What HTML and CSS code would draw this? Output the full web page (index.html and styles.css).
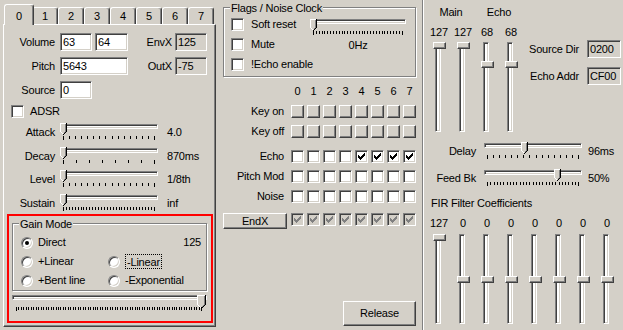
FILE: index.html
```html
<!DOCTYPE html>
<html lang="en">
<head>
<meta charset="utf-8">
<title>DSP</title>
<link rel="stylesheet" href="styles.css">
</head>
<body>
<svg class="defs" width="0" height="0" aria-hidden="true">
  <defs>
    <symbol id="chk" viewBox="0 0 7 7"><path d="M6 0h1v1H6zM5 1h2v1H5zM0 2h1v1H0zM4 2h3v1H4zM0 3h2v1H0zM3 3h3v1H3zM0 4h5v1H0zM1 5h3v1H1zM2 6h1v1H2z"/></symbol>
    <symbol id="thumb" viewBox="0 0 7 12">
      <path fill="#d4d0c8" d="M1 1h4v8H1zM2 9h2v1H2zM3 10h1v1H3z"/>
      <path fill="#fff" d="M0 0h6v1H1v8H0zM1 9h1v1H1zM2 10h1v1H2z"/>
      <path fill="#808080" d="M5 1h1v8H5zM4 9h1v1H4z"/>
      <path fill="#000" d="M6 0h1v9H6zM5 9h1v1H5zM4 10h1v1H4zM3 11h1v1H3z"/>
    </symbol>
    <symbol id="thumb9" viewBox="0 0 9 13">
      <path fill="#d4d0c8" d="M1 1h6v9H1zM2 10h4v1H2zM3 11h2v1H3z"/>
      <path fill="#fff" d="M0 0h8v1H1v9H0zM1 10h1v1H1zM2 11h1v1H2zM3 12h1v1H3z"/>
      <path fill="#808080" d="M7 1h1v9H7zM6 10h1v1H6zM5 11h1v1H5z"/>
      <path fill="#000" d="M8 0h1v10H8zM7 10h1v1H7zM6 11h1v1H6zM4 12h2v1H4z"/>
    </symbol>
  </defs>
</svg>
<div class="dlg">
  <section class="left">
    <div class="tabs">
      <div class="tab sel">0</div><div class="tab">1</div><div class="tab">2</div><div class="tab">3</div><div class="tab">4</div><div class="tab">5</div><div class="tab">6</div><div class="tab">7</div>
    </div>
    <div class="panel">
      <div class="frow">
        <span class="lbl">Volume</span>
        <span class="edit w32">63</span>
        <span class="edit w33 gap3">64</span>
        <span class="lbl2">EnvX</span>
        <span class="edit ro w32">125</span>
      </div>
      <div class="frow">
        <span class="lbl">Pitch</span>
        <span class="edit w68">5643</span>
        <span class="lbl2">OutX</span>
        <span class="edit ro w32">-75</span>
      </div>
      <div class="frow">
        <span class="lbl">Source</span>
        <span class="edit w32">0</span>
      </div>
      <div class="adsr"><span class="cb"></span><span class="cbl">ADSR</span></div>
      <div class="srow sr1">
        <span class="lbl">Attack</span>
        <div class="hs w98"><div class="track"></div><svg class="thumb" style="left:0px" viewBox="0 0 7 12"><use href="#thumb"/></svg>
          <div class="ticks"><i class="e"></i><i></i><i></i><i></i><i></i><i></i><i></i><i></i><i></i><i></i><i></i><i></i><i></i><i></i><i></i><i class="e"></i></div></div>
        <span class="val">4.0</span>
      </div>
      <div class="srow sr2">
        <span class="lbl">Decay</span>
        <div class="hs w98"><div class="track"></div><svg class="thumb" style="left:0px" viewBox="0 0 7 12"><use href="#thumb"/></svg>
          <div class="ticks"><i class="e"></i><i></i><i></i><i></i><i></i><i></i><i></i><i class="e"></i></div></div>
        <span class="val">870ms</span>
      </div>
      <div class="srow sr3">
        <span class="lbl">Level</span>
        <div class="hs w98"><div class="track"></div><svg class="thumb" style="left:0px" viewBox="0 0 7 12"><use href="#thumb"/></svg>
          <div class="ticks"><i class="e"></i><i></i><i></i><i></i><i></i><i></i><i></i><i></i><i></i><i></i><i></i><i></i><i></i><i></i><i></i><i class="e"></i></div></div>
        <span class="val">1/8th</span>
      </div>
      <div class="srow sr4">
        <span class="lbl">Sustain</span>
        <div class="hs w98"><div class="track"></div><svg class="thumb" style="left:0px" viewBox="0 0 7 12"><use href="#thumb"/></svg>
          <div class="ticks"><i class="e"></i><i></i><i></i><i></i><i></i><i></i><i></i><i></i><i></i><i></i><i></i><i></i><i></i><i></i><i></i><i></i><i></i><i></i><i></i><i></i><i></i><i></i><i></i><i></i><i></i><i></i><i></i><i></i><i></i><i></i><i></i><i class="e"></i></div></div>
        <span class="val">inf</span>
      </div>
      <div class="gainbox">
        <div class="group gaingrp">
          <div class="gtitle">Gain Mode</div>
          <div class="gr first">
            <span class="opt"><span class="radio on"></span><span class="t">Direct</span></span>
            <span class="gv">125</span>
          </div>
          <div class="gr">
            <span class="opt"><span class="radio"></span><span class="t">+Linear</span></span>
            <span class="opt"><span class="radio"></span><span class="t focus">-Linear</span></span>
          </div>
          <div class="gr">
            <span class="opt"><span class="radio"></span><span class="t">+Bent line</span></span>
            <span class="opt"><span class="radio"></span><span class="t">-Exponential</span></span>
          </div>
        </div>
        <div class="hs gain"><div class="track"></div><svg class="thumb9" style="left:185px" viewBox="0 0 9 13"><use href="#thumb9"/></svg>
          <div class="ticks"><i class="e"></i><i></i><i></i><i></i><i></i><i></i><i></i><i></i><i></i><i></i><i></i><i></i><i></i><i></i><i></i><i></i><i></i><i></i><i></i><i></i><i></i><i></i><i></i><i></i><i></i><i></i><i></i><i></i><i></i><i></i><i></i><i></i><i></i><i></i><i></i><i></i><i></i><i></i><i></i><i></i><i></i><i></i><i></i><i></i><i></i><i></i><i></i><i></i><i></i><i></i><i></i><i></i><i></i><i></i><i></i><i></i><i></i><i></i><i></i><i></i><i></i><i></i><i></i><i></i><i></i><i></i><i></i><i></i><i></i><i></i><i></i><i></i><i></i><i></i><i></i><i class="e"></i></div></div>
      </div>
    </div>
  </section>

  <section class="mid">
    <div class="group flags">
      <div class="gtitle">Flags / Noise Clock</div>
      <div class="flagbody">
        <div class="fchecks">
          <div class="crow"><span class="cb"></span><span class="cbl2">Soft reset</span></div>
          <div class="crow"><span class="cb"></span><span class="cbl2">Mute</span></div>
          <div class="crow"><span class="cb"></span><span class="cbl2">!Echo enable</span></div>
        </div>
        <div class="noise">
          <div class="hs w96"><div class="track"></div><svg class="thumb" style="left:0px" viewBox="0 0 7 12"><use href="#thumb"/></svg>
            <div class="ticks"><i class="e"></i><i></i><i></i><i></i><i></i><i></i><i></i><i></i><i></i><i></i><i></i><i></i><i></i><i></i><i></i><i></i><i></i><i></i><i></i><i></i><i></i><i></i><i></i><i></i><i></i><i></i><i></i><i></i><i></i><i></i><i></i><i class="e"></i></div></div>
          <div class="hz">0Hz</div>
        </div>
      </div>
    </div>

    <div class="bits">
      <div class="brow head"><span class="blbl"></span><span class="bn">0</span><span class="bn">1</span><span class="bn">2</span><span class="bn">3</span><span class="bn">4</span><span class="bn">5</span><span class="bn">6</span><span class="bn">7</span></div>
      <div class="brow keyon"><span class="blbl">Key on</span><span class="pb"></span><span class="pb"></span><span class="pb"></span><span class="pb"></span><span class="pb"></span><span class="pb"></span><span class="pb"></span><span class="pb"></span></div>
      <div class="brow keyoff"><span class="blbl">Key off</span><span class="pb"></span><span class="pb"></span><span class="pb"></span><span class="pb"></span><span class="pb"></span><span class="pb"></span><span class="pb"></span><span class="pb"></span></div>
      <div class="brow echo"><span class="blbl">Echo</span><span class="cb"></span><span class="cb"></span><span class="cb"></span><span class="cb"></span><span class="cb"><svg class="ck" viewBox="0 0 7 7"><use href="#chk"/></svg></span><span class="cb"><svg class="ck" viewBox="0 0 7 7"><use href="#chk"/></svg></span><span class="cb"><svg class="ck" viewBox="0 0 7 7"><use href="#chk"/></svg></span><span class="cb"><svg class="ck" viewBox="0 0 7 7"><use href="#chk"/></svg></span></div>
      <div class="brow pmod"><span class="blbl">Pitch Mod</span><span class="cb"></span><span class="cb"></span><span class="cb"></span><span class="cb"></span><span class="cb"></span><span class="cb"></span><span class="cb"></span><span class="cb"></span></div>
      <div class="brow noiserow"><span class="blbl">Noise</span><span class="cb"></span><span class="cb"></span><span class="cb"></span><span class="cb"></span><span class="cb"></span><span class="cb"></span><span class="cb"></span><span class="cb"></span></div>
      <div class="brow endx"><span class="btn endxbtn">EndX</span><span class="cb dis"><svg class="ck" viewBox="0 0 7 7"><use href="#chk"/></svg></span><span class="cb dis"><svg class="ck" viewBox="0 0 7 7"><use href="#chk"/></svg></span><span class="cb dis"><svg class="ck" viewBox="0 0 7 7"><use href="#chk"/></svg></span><span class="cb dis"><svg class="ck" viewBox="0 0 7 7"><use href="#chk"/></svg></span><span class="cb dis"><svg class="ck" viewBox="0 0 7 7"><use href="#chk"/></svg></span><span class="cb dis"><svg class="ck" viewBox="0 0 7 7"><use href="#chk"/></svg></span><span class="cb dis"><svg class="ck" viewBox="0 0 7 7"><use href="#chk"/></svg></span><span class="cb dis"><svg class="ck" viewBox="0 0 7 7"><use href="#chk"/></svg></span></div>
    </div>

    <div class="relrow"><span class="btn release">Release</span></div>
  </section>

  <div class="sep"></div>

  <section class="right">
    <div class="rtop">
      <div class="vgroup">
        <div class="vhead"><span>Main</span><span>Echo</span></div>
        <div class="vcols">
          <div class="vcol"><span class="vval">127</span><div class="vs"><div class="vtrack"></div><div class="vthumb" style="top:0px"></div></div></div>
          <div class="vcol"><span class="vval">127</span><div class="vs"><div class="vtrack"></div><div class="vthumb" style="top:0px"></div></div></div>
          <div class="vcol"><span class="vval">68</span><div class="vs"><div class="vtrack"></div><div class="vthumb" style="top:19px"></div></div></div>
          <div class="vcol"><span class="vval">68</span><div class="vs"><div class="vtrack"></div><div class="vthumb" style="top:19px"></div></div></div>
        </div>
      </div>
      <div class="addr">
        <div class="arow"><span class="albl">Source Dir</span><span class="edit ro w34">0200</span></div>
        <div class="arow"><span class="albl">Echo Addr</span><span class="edit ro w34">CF00</span></div>
      </div>
    </div>

    <div class="drow first">
      <span class="dlbl">Delay</span>
      <div class="hs w98"><div class="track"></div><svg class="thumb" style="left:37px" viewBox="0 0 7 12"><use href="#thumb"/></svg>
        <div class="ticks"><i class="e"></i><i></i><i></i><i></i><i></i><i></i><i></i><i></i><i></i><i></i><i></i><i></i><i></i><i></i><i></i><i class="e"></i></div></div>
      <span class="dval">96ms</span>
    </div>
    <div class="drow">
      <span class="dlbl">Feed Bk</span>
      <div class="hs w98"><div class="track"></div><svg class="thumb" style="left:70px" viewBox="0 0 7 12"><use href="#thumb"/></svg>
        <div class="ticks"><i class="e"></i><i></i><i></i><i></i><i></i><i></i><i></i><i></i><i></i><i></i><i></i><i></i><i></i><i></i><i></i><i></i><i></i><i></i><i></i><i></i><i></i><i></i><i></i><i></i><i></i><i></i><i></i><i></i><i class="e"></i></div></div>
      <span class="dval">50%</span>
    </div>

    <div class="firtitle">FIR Filter Coefficients</div>
    <div class="vcols fir">
      <div class="vcol"><span class="vval">127</span><div class="vs"><div class="vtrack"></div><div class="vthumb" style="top:0px"></div></div></div>
      <div class="vcol"><span class="vval">0</span><div class="vs"><div class="vtrack"></div><div class="vthumb" style="top:42px"></div></div></div>
      <div class="vcol"><span class="vval">0</span><div class="vs"><div class="vtrack"></div><div class="vthumb" style="top:42px"></div></div></div>
      <div class="vcol"><span class="vval">0</span><div class="vs"><div class="vtrack"></div><div class="vthumb" style="top:42px"></div></div></div>
      <div class="vcol"><span class="vval">0</span><div class="vs"><div class="vtrack"></div><div class="vthumb" style="top:42px"></div></div></div>
      <div class="vcol"><span class="vval">0</span><div class="vs"><div class="vtrack"></div><div class="vthumb" style="top:42px"></div></div></div>
      <div class="vcol"><span class="vval">0</span><div class="vs"><div class="vtrack"></div><div class="vthumb" style="top:42px"></div></div></div>
      <div class="vcol"><span class="vval">0</span><div class="vs"><div class="vtrack"></div><div class="vthumb" style="top:42px"></div></div></div>
    </div>
  </section>
</div>
</body>
</html>
```

FILE: styles.css
```css
* { box-sizing: border-box; }
html, body { margin: 0; padding: 0; }
body {
  width: 623px;
  height: 330px;
  overflow: hidden;
  background: #d4d0c8;
  color: #000;
  font: 11px/13px "Liberation Sans", Arial, sans-serif;
  letter-spacing: -0.2px;
}
.defs { position: absolute; width: 0; height: 0; overflow: hidden; }
.dlg { display: flex; height: 330px; }

/* ---------- shared win2k controls ---------- */
.edit {
  flex: none;
  height: 18px;
  border: 1px solid;
  border-color: #808080 #fff #fff #808080;
  box-shadow: inset 1px 1px #404040, inset -1px -1px #d4d0c8;
  background: #fff;
  padding: 0 0 0 2px;
  line-height: 17px;
  white-space: nowrap;
  overflow: hidden;
}
.edit.ro { background: #d4d0c8; }
.w32 { width: 32px; }
.w33 { width: 33px; }
.w34 { width: 34px; }
.w68 { width: 68px; }
.gap3 { margin-left: 3px; }

.cb {
  flex: none;
  width: 13px;
  height: 13px;
  border: 1px solid;
  border-color: #808080 #fff #fff #808080;
  box-shadow: inset 1px 1px #404040, inset -1px -1px #d4d0c8;
  background: #fff;
  padding: 2px;
  display: flex;
}
.cb.dis { background: #d4d0c8; }
.ck { width: 7px; height: 7px; fill: #000; display: block; }
.cb.dis .ck { fill: #808080; }

.pb {
  flex: none;
  width: 13px;
  height: 13px;
  border: 1px solid;
  border-color: #fff #404040 #404040 #fff;
  box-shadow: inset -1px -1px #808080;
  background: #d4d0c8;
}

.btn {
  flex: none;
  display: flex;
  align-items: center;
  justify-content: center;
  border: 1px solid;
  border-color: #fff #404040 #404040 #fff;
  box-shadow: inset -1px -1px #808080;
  background: #d4d0c8;
}

.radio {
  flex: none;
  width: 12px;
  height: 12px;
  border-radius: 50%;
  border: 1px solid;
  border-color: #808080 #fff #fff #808080;
  box-shadow: inset 1px 1px #404040, inset -1px -1px #d4d0c8;
  background: #fff;
  display: flex;
  align-items: center;
  justify-content: center;
}
.radio.on::after {
  content: "";
  width: 4px;
  height: 4px;
  border-radius: 50%;
  background: #000;
}

.group {
  border: 1px solid #808080;
  box-shadow: inset 1px 1px #fff, 1px 1px #fff;
}
.gtitle {
  width: fit-content;
  background: #d4d0c8;
  margin: -6px 0 0 6px;
  padding: 0 1px;
  line-height: 13px;
}

/* horizontal trackbar */
.hs { position: relative; flex: none; height: 18px; }
.w98 { width: 98px; }
.w96 { width: 96px; }
.track {
  height: 5px;
  margin-top: 1px;
  border: 1px solid;
  border-color: #808080 #fff #fff #808080;
  box-shadow: inset 1px 1px #404040, inset -1px -1px #d4d0c8;
  background: #fff;
}
.thumb { position: absolute; top: 0; width: 7px; height: 12px; display: block; }
.thumb9 { position: absolute; top: 0; width: 9px; height: 13px; display: block; }
.ticks {
  display: flex;
  justify-content: space-between;
  align-items: flex-start;
  height: 4px;
  margin: 7px 3px 0;
}
.ticks i { display: block; width: 1px; height: 3px; background: #000; }
.ticks i.e { height: 4px; }

/* vertical trackbar */
.vcols { display: flex; }
.vcol { width: 24px; display: flex; flex-direction: column; }
.vval { height: 13px; margin-top: 7px; text-align: center; white-space: nowrap; }
.vs { position: relative; width: 13px; height: 90px; margin: 3px 0 0 6px; }
.vtrack {
  width: 6px;
  height: 90px;
  margin-left: 2px;
  border: 1px solid;
  border-color: #808080 #fff #fff #808080;
  box-shadow: inset 1px 1px #404040, inset -1px -1px #d4d0c8;
  background: #fff;
}
.vthumb {
  position: absolute;
  left: 0;
  width: 13px;
  height: 7px;
  border: 1px solid;
  border-color: #fff #404040 #404040 #fff;
  box-shadow: inset -1px -1px #808080;
  background: #d4d0c8;
}

/* ---------- left: tab control ---------- */
.left { flex: none; width: 216px; padding: 4px 0 0 3px; }
.tabs { display: flex; align-items: flex-end; height: 20px; padding-left: 3px; }
.tab {
  flex: none;
  width: 26px;
  height: 17px;
  border: 1px solid;
  border-bottom: 0;
  border-color: #fff #404040 #404040 #fff;
  border-radius: 3px 3px 0 0;
  box-shadow: inset -1px 0 #808080;
  background: #d4d0c8;
  text-align: center;
  line-height: 16px;
}
.tab.sel {
  position: relative;
  z-index: 1;
  width: 30px;
  height: 21px;
  margin: 0 -2px -1px;
  line-height: 22px;
}
.panel {
  width: 213px;
  height: 303px;
  border: 1px solid;
  border-color: #fff #404040 #404040 #fff;
  box-shadow: inset -1px -1px #808080;
  padding-top: 8px;
}
.frow { display: flex; align-items: center; height: 18px; margin-bottom: 6px; }
.lbl { flex: none; width: 51px; margin-right: 5px; text-align: right; white-space: nowrap; }
.lbl2 { flex: none; width: 44px; margin-right: 3px; text-align: right; }
.adsr { display: flex; align-items: center; height: 13px; margin: 3px 0 0 7px; }
.cbl { margin-left: 6px; }

.srow { display: flex; align-items: center; height: 18px; }
.sr1 { margin-top: 5px; }
.sr2 { margin-top: 6px; }
.sr3 { margin-top: 5px; }
.sr4 { margin-top: 6px; }
.val { margin-left: 9px; white-space: nowrap; }

.gainbox {
  width: 206px;
  height: 109px;
  margin: 2px 0 0 3px;
  border: 2px solid #f00;
}
.gaingrp { width: 195px; height: 68px; margin: 7px 0 0 3px; }
.gr { display: flex; align-items: center; height: 13px; margin: 6px 0 0 8px; }
.gr.first { margin-top: 5px; }
.opt { flex: none; display: flex; align-items: center; width: 87px; white-space: nowrap; }
.opt .t { margin-left: 5px; }
.opt .focus { border: 1px dotted #000; padding: 1px 1px 0; line-height: 12px; margin-left: 5px; }
.gv { margin-left: auto; margin-right: 5px; }
.hs.gain { width: 195px; height: 18px; margin: 4px 0 0 3px; }
.hs.gain .track { margin-top: 3px; }
.hs.gain .ticks { margin: 7px 4px 0; }

/* ---------- middle ---------- */
.mid { flex: none; width: 206px; display: flex; flex-direction: column; }
.flags { width: 193px; height: 70px; margin: 7px 0 0 7px; }
.flagbody { display: flex; margin-top: 3px; }
.fchecks { flex: none; width: 79px; margin-left: 7px; }
.crow { display: flex; align-items: center; height: 13px; margin-bottom: 7px; white-space: nowrap; }
.cbl2 { margin-left: 7px; }
.noise { flex: none; width: 96px; }
.hz { text-align: center; margin-top: 2px; }

.bits { margin-top: 8px; }
.brow { display: flex; align-items: center; height: 13px; }
.brow > .cb, .brow > .pb, .bn { margin-right: 3px; }
.bn { flex: none; width: 13px; text-align: center; }
.blbl { flex: none; width: 68px; margin-right: 7px; text-align: right; white-space: nowrap; }
.keyon { margin-top: 7px; }
.keyoff { margin-top: 7px; }
.echo { margin-top: 12px; }
.pmod { margin-top: 7px; }
.noiserow { margin-top: 7px; }
.endx { margin-top: 10px; height: 16px; align-items: flex-start; }
.endxbtn { width: 64px; height: 16px; margin: 0 4px 0 7px; }

.relrow { margin-top: auto; display: flex; justify-content: flex-end; padding: 0 6px 4px 0; }
.release { width: 73px; height: 25px; }

.sep { flex: none; width: 2px; border-left: 1px solid #808080; border-right: 1px solid #fff; }

/* ---------- right ---------- */
.right { flex: none; width: 199px; padding-left: 3px; }
.rtop { display: flex; }
.vgroup { flex: none; width: 96px; }
.vhead { display: flex; height: 13px; margin-top: 6px; }
.vhead span { width: 48px; text-align: center; }
.addr { flex: none; margin-top: 40px; }
.arow { display: flex; align-items: center; height: 18px; margin-bottom: 9px; }
.albl { width: 56px; margin-right: 8px; text-align: right; white-space: nowrap; }

.drow { display: flex; align-items: center; height: 18px; margin-top: 9px; }
.drow.first { margin-top: 10px; }
.dlbl { flex: none; width: 49px; margin-right: 8px; text-align: right; white-space: nowrap; }
.dval { margin-left: 6px; }
.firtitle { margin: 10px 0 0 4px; height: 13px; white-space: nowrap; }
.fir .vs { margin-top: 4px; }
```
